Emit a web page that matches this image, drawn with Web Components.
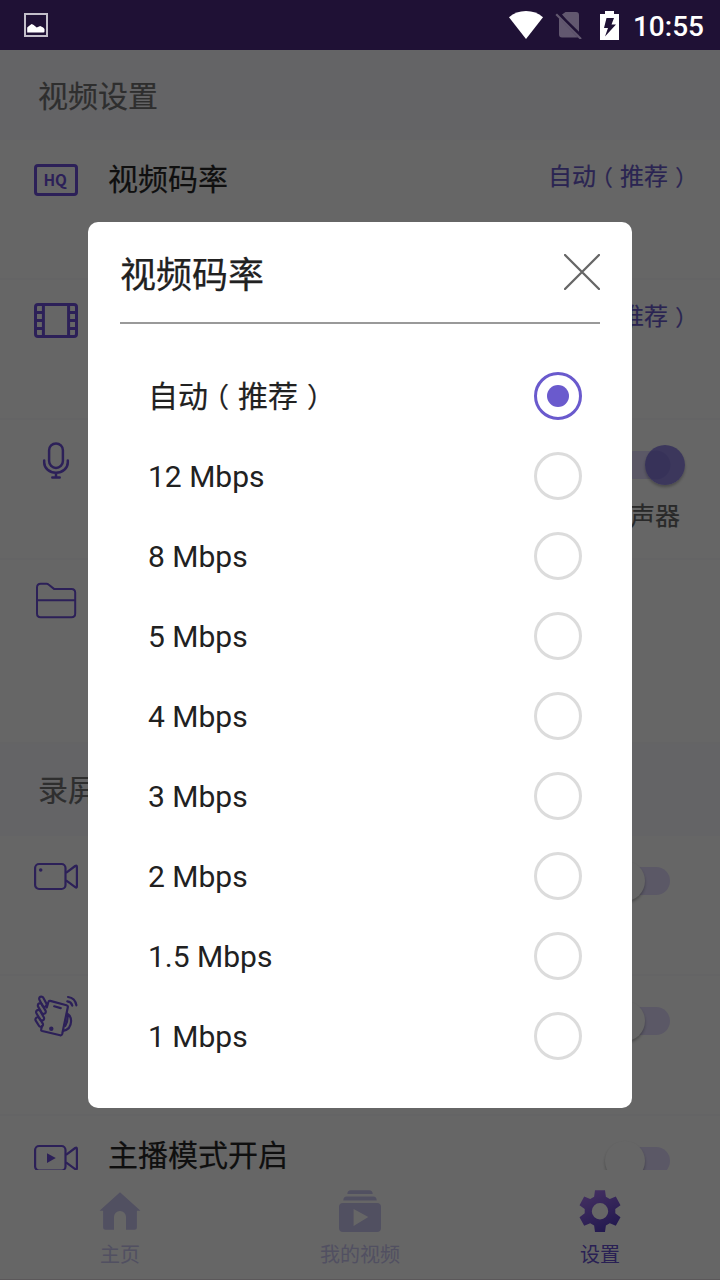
<!DOCTYPE html>
<html lang="zh-CN">
<head>
<meta charset="utf-8">
<title>视频设置</title>
<style>
  html, body {
    margin: 0;
    height: 100%;
    overflow: hidden;
  }
  body {
    font-family: Roboto, "Noto Sans CJK SC", sans-serif;
    --accent: #6a5acd;
    --icon: #6e50dc;
  }
</style>
</head>
<body>
<screen-recorder></screen-recorder>

<script>
const ICONS = {
  hq: `<rect x="1.5" y="7.5" width="41" height="29" rx="2.5" stroke-width="3"/>
    <text x="9.4" y="27.9" font-family="Noto Sans CJK SC, sans-serif" font-weight="700" font-size="16" textLength="23.5" lengthAdjust="spacingAndGlyphs" fill="currentColor" stroke="none">HQ</text>`,
  film: `<g stroke-width="3"><rect x="1.5" y="6.5" width="41" height="32" rx="2.5"/>
    <path d="M9.4 6.5v32M34.6 6.5v32M1.5 14.4h8M1.5 22.4h8M1.5 30.4h8M34.6 14.4h8M34.6 22.4h8M34.6 30.4h8"/></g>`,
  mic: `<g stroke-width="2.5" stroke-linecap="round"><rect x="15.1" y="5.4" width="13.8" height="24.6" rx="6.9"/>
    <path d="M10.2 22.600v2a11.800 10.200 0 0 0 23.600 0v-2M22 35v4.400M18.300 39.600h7.400"/></g>`,
  folder: `<path stroke-width="2" stroke-linejoin="round" d="M3 35V9.500q0-3.700 3.700-3.700h6q1 0 1.800.7L20 10.900h17.500q3.700 0 3.700 3.700V35.500q0 3.700-3.700 3.700h-31Q3 39.200 3 35.500zM3 22.300h38"/>`,
  camera: `<g stroke-width="2.200"><rect x="1.100" y="10" width="30.400" height="25" rx="4"/>
    <path stroke-linejoin="round" d="M32 18.800 41.200 12q1.700-1 1.700.8v19.500q0 2-1.700.8L32 26.400"/></g>
    <circle cx="6.700" cy="16" r="1.800" fill="currentColor" stroke="none"/>`,
  shake: `<g stroke-width="2.200" stroke-linecap="round" stroke-linejoin="round">
    <path d="M12.800 13.500 14.400 8q.4-1.500 1.900-1.100l16.200 4.300q1.700.5 1.300 2.100L28.200 40q-.5 1.600-2 1.300L8.200 37q-1.400-.4-1-1.800l.7-3"/>
    <path d="M33 19.500q4.200 2.400 4.100 7.500-.3 8.700-8 9.800M33.300 19.500q1.200 6.500-2 12.300M20.200 12.300l6.500 1.800"/>
    <rect x="-5.500" y="-2.200" width="11" height="4.400" rx="2.200" transform="translate(8.900 7.700) rotate(62)"/>
    <rect x="-5.800" y="-2.200" width="11.600" height="4.400" rx="2.200" transform="translate(7.800 14.600) rotate(60)"/>
    <rect x="-5.800" y="-2.200" width="11.600" height="4.400" rx="2.200" transform="translate(6.100 21.200) rotate(60)"/>
    <rect x="-5.200" y="-2.200" width="10.400" height="4.400" rx="2.200" transform="translate(5.200 28) rotate(58)"/>
    <path d="M33.300 7.400q4 .6 5 4.200M34 3q7.200 1 8.400 8.300"/></g>
    <circle cx="17.300" cy="34.700" r="2.200" fill="currentColor" stroke="none"/>`,
  live: `<g stroke-width="2.200"><rect x="1.100" y="12" width="30.400" height="24.500" rx="4"/>
    <path stroke-linejoin="round" d="M32 20.800 41.200 14q1.700-1 1.700.8v19.500q0 2-1.700.8L32 28.400"/></g>
    <path d="M13 19.300l8.800 4.700-8.800 4.900z" fill="currentColor" stroke="none"/>`,
  home: `<path fill="currentColor" stroke="none" d="M22 4.300 42.500 22.800h-3.600V39.300q0 2.500-2.500 2.500H28V29a6 6 0 0 0-12 0v12.800H7.600q-2.500 0-2.500-2.500V22.800H1.500z"/>`,
  videos: `<g fill="currentColor" stroke="none"><path d="M9.300 6q0-3.800 3.500-3.800h18.400q3.500 0 3.500 3.800zM5.300 12.500q0-4 3.500-4h26.400q3.500 0 3.500 4z"/>
    <path fill-rule="evenodd" d="M5 15h34q4 0 4 4v21q0 4-4 4H5q-4 0-4-4V19q0-4 4-4zM15.600 21v17L30.300 29z"/></g>`,
  gear: `<defs><linearGradient id="g" x1="0.200" y1="0" x2="0.700" y2="1"><stop offset="0" stop-color="#ad79f5"/><stop offset="1" stop-color="#543dc4"/></linearGradient></defs>
    <path fill="url(#g)" fill-rule="evenodd" stroke="none" d="M17 2.300h10l.9 6.500 3.900 2.200 6-2.500 4.700 8.700-5.200 3.900v4.200l5.200 4-4.700 8.500-6-2.500-3.900 2.200-.9 6.500H17l-.9-6.500-3.900-2.200-6 2.500-4.700-8.500 5.200-4v-4.200l-5.200-3.900 4.700-8.700 6 2.500L16.100 8.800zM22 15a8.200 8.200 0 1 0 0 16.400A8.200 8.200 0 0 0 22 15z"/>`
};

class AppIcon extends HTMLElement {
  constructor() {
    super();
    this.attachShadow({mode: "open"});
    this.shadowRoot.innerHTML = `
      <style>
        :host { display: block; width: 44px; height: 44px; flex: none; }
        svg { display: block; overflow: visible; }
      </style>
      <svg width="44" height="44" viewBox="0 0 44 44" fill="none" stroke="currentColor">${ICONS[this.getAttribute("name")]}</svg>
    `;
  }
}

// 自动（推荐）
class AutoLabel extends HTMLElement {
  constructor() {
    super();
    this.attachShadow({mode: "open"});
    this.shadowRoot.innerHTML = `
      <style>
        :host {
          display: inline-block;
          white-space: nowrap;
          font-family: "Noto Sans CJK SC", sans-serif;
          text-spacing-trim: space-all;
          -webkit-text-stroke: .2px currentColor;
        }
        span { font-size: .92em; line-height: 1; }
        .open { margin: 0 .32em 0 -.233em; }
        .close { margin: 0 -.238em 0 .325em; }
      </style>自动<span class="open">（</span>推荐<span class="close">）</span>`;
  }
}

class StatusBar extends HTMLElement {
  constructor() {
    super();
    this.attachShadow({mode: "open"});
    this.shadowRoot.innerHTML = `
      <style>
        :host {
          display: flex;
          align-items: center;
          height: 50px;
          box-sizing: border-box;
          padding: 0 16px 0 24px;
          background: #1f1135;
          color: #fff;
        }
        svg { display: block; flex: none; }
        .space { flex: 1; }
        .sim { margin-left: 12px; }
        .battery { margin-left: 17px; }
        .time { margin-left: 14px; font-size: 28px; line-height: 46px; font-weight: 500; padding-top: 4px; }
      </style>
      <svg width="24" height="24" viewBox="0 0 24 24">
        <rect x="1" y="1" width="22" height="22" fill="none" stroke="#c3bfca" stroke-width="2"/>
        <path fill="#fff" d="M3.200 19.500V14.500l3-2.500 1.500-1 2 1 3 2.500 3.500-1.500 3 1.500 1.300 1.500V18.500q0 1-1 1z"/>
      </svg>
      <div class="space"></div>
      <svg width="34" height="28" viewBox="0 0 34 28"><path fill="#fff" d="M0 6.300Q7 0 17 0t17 6.300L17 28z"/></svg>
      <svg class="sim" width="28" height="28" viewBox="0 0 28 28">
        <path fill="#62586f" d="M7 3.500 10.500 1H21q3 0 3 3v20.500zM4 7l19 19.500H7q-3 0-3-3z"/>
        <path d="M2.200 1.200 27 25.500" stroke="#1f1135" stroke-width="2.500"/>
        <path d="M1.200 3.200 26 28" stroke="#62586f" stroke-width="2.200"/>
      </svg>
      <svg class="battery" width="19" height="29" viewBox="0 0 19 29">
        <path fill="#fff" d="M0 3h5V0h9v3h5v26H0z"/>
        <path fill="#1f1135" d="M6.500 7h7.500l-2.500 6.500h4.500L5 25.500l3-8.500H4z"/>
      </svg>
      <div class="time">10:55</div>
    `;
  }
}

class SectionTitle extends HTMLElement {
  constructor() {
    super();
    this.attachShadow({mode: "open"});
    this.shadowRoot.innerHTML = `
      <style>
        :host {
          display: flex;
          align-items: center;
          height: 92px;
          box-sizing: border-box;
          padding: 0 0 5px 38px;
          background: #fafaff;
          color: #737373;
          font-size: 30px;
          -webkit-text-stroke: .2px currentColor;
        }
      </style>
      <slot></slot>
    `;
  }
}

class SettingRow extends HTMLElement {
  constructor() {
    super();
    this.attachShadow({mode: "open"});
    this.shadowRoot.innerHTML = `
      <style>
        :host {
          display: flex;
          align-items: flex-start;
          height: 140px;
          box-sizing: border-box;
          padding: 0 28px 0 34px;
          border-bottom: 2px solid #fafafc;
        }
        app-icon { margin-top: 18px; color: var(--icon); }
        .title {
          margin: 26px 0 0 30px;
          flex: 1;
          font-size: 30px;
          line-height: 28px;
          color: #262626;
          -webkit-text-stroke: .2px currentColor;
        }
      </style>
      <app-icon name="${this.getAttribute("icon")}"></app-icon>
      <div class="title"><slot></slot></div>
      <slot name="value"></slot>
    `;
  }
}

class ToggleSwitch extends HTMLElement {
  constructor() {
    super();
    this.attachShadow({mode: "open"});
    this.shadowRoot.innerHTML = `
      <style>
        :host {
          display: flex;
          align-items: center;
          width: 50px;
          height: 28px;
          border-radius: 14px;
          background: #e3dcff;
        }
        i {
          flex: none;
          width: 40px;
          height: 40px;
          margin-left: -15px;
          border-radius: 50%;
          background: #fefefe;
          box-shadow: 0 2px 3px rgba(0, 0, 0, .28);
        }
        :host([on]) i {
          margin-left: 25px;
          background: radial-gradient(circle at 11px 20px, #8b7edf 14px, #968be6 15px);
        }
      </style>
      <i></i>
    `;
  }
}

class BottomNav extends HTMLElement {
  constructor() {
    super();
    this.attachShadow({mode: "open"});
    this.shadowRoot.innerHTML = `
      <style>
        :host {
          display: grid;
          grid-template-columns: repeat(3, 1fr);
          position: relative;
          height: 110px;
          flex: none;
          box-sizing: border-box;
          background: #fff;
          border-bottom: 1px solid #e4dce2;
          font-size: 20px;
          color: #cbc7f3;
        }
        div {
          display: flex;
          flex-direction: column;
          align-items: center;
          padding-top: 18px;
        }
        span { line-height: 30px; margin-top: 8px; }
        .on { color: #6750d2; }
      </style>
      <div><app-icon name="home"></app-icon><span>主页</span></div>
      <div><app-icon name="videos"></app-icon><span>我的视频</span></div>
      <div class="on"><app-icon name="gear"></app-icon><span>设置</span></div>
    `;
  }
}

class RadioOption extends HTMLElement {
  constructor() {
    super();
    this.attachShadow({mode: "open"});
    this.shadowRoot.innerHTML = `
      <style>
        :host {
          display: flex;
          align-items: center;
          justify-content: space-between;
          height: 80px;
          padding: 0 18px 0 28px;
          font-size: 30px;
          line-height: 80px;
        }
        .label { padding-top: 2px; }
        :host([checked]) .label { padding: 0 0 1px; }
        i {
          display: grid;
          place-items: center;
          width: 48px;
          height: 48px;
          box-sizing: border-box;
          border: 3px solid #dcdcdc;
          border-radius: 50%;
        }
        :host([checked]) i { border-color: var(--accent); }
        :host([checked]) i::after {
          content: "";
          width: 22.500px;
          height: 22.500px;
          border-radius: 50%;
          background: var(--accent);
        }
      </style>
      <div class="label"><slot></slot></div>
      <i></i>
    `;
  }
}

class BitrateDialog extends HTMLElement {
  constructor() {
    super();
    this.attachShadow({mode: "open"});
    this.shadowRoot.innerHTML = `
      <style>
        :host {
          display: block;
          width: 544px;
          height: 886px;
          box-sizing: border-box;
          padding: 0 32px 32px;
          border-radius: 10px;
          background: #fff;
          color: #212121;
        }
        header {
          display: flex;
          align-items: center;
          justify-content: space-between;
          height: 100px;
          border-bottom: 2px solid #999;
          margin-bottom: 32px;
          font-size: 36px;
        }
        header span { padding-bottom: 1px; -webkit-text-stroke: .25px currentColor; }
      </style>
      <header>
        <span>视频码率</span>
        <svg width="36" height="36" viewBox="0 0 36 36"><path d="M1 1l34 34M35 1 1 35" stroke="#666" stroke-width="2.300" stroke-linecap="round"/></svg>
      </header>
      <slot></slot>
    `;
  }
}

class ScreenRecorder extends HTMLElement {
  constructor() {
    super();
    this.attachShadow({mode: "open"});
    this.shadowRoot.innerHTML = `
      <style>
        :host {
          display: flex;
          flex-direction: column;
          width: 720px;
          height: 1280px;
          overflow: hidden;
        }
        .page {
          position: relative;
          flex: 1;
          min-height: 0;
          display: flex;
          flex-direction: column;
          background: #fff;
        }
        /* the last row runs on under the nav */
        .list { flex: 1; min-height: 0; }
        .first { height: 90px; padding-bottom: 3px; }
        .tall { height: 184px; }
        .value { font-size: 24px; line-height: 69px; color: var(--accent); }
        toggle-switch { margin: 31px 22px 0 0; }
        .audio {
          display: flex;
          flex-direction: column;
          align-items: flex-end;
          font-size: 25px;
          color: #666;
          -webkit-text-stroke: .2px currentColor;
        }
        .audio span { line-height: 36px; margin: 20px 12px 0 0; }
        .scrim {
          position: absolute;
          inset: 0;
          display: flex;
          justify-content: center;
          align-items: center;
          background: rgba(0, 0, 0, .6);
        }
      </style>
      <status-bar></status-bar>
      <div class="page">
        <div class="list">
          <section-title class="first">视频设置</section-title>
          <setting-row icon="hq">视频码率<auto-label slot="value" class="value"></auto-label></setting-row>
          <setting-row icon="film"><auto-label slot="value" class="value"></auto-label></setting-row>
          <setting-row icon="mic">
            <div slot="value" class="audio"><toggle-switch on></toggle-switch><span>扬声器</span></div>
          </setting-row>
          <setting-row icon="folder" class="tall"></setting-row>
          <section-title>录屏设置</section-title>
          <setting-row icon="camera"><toggle-switch slot="value"></toggle-switch></setting-row>
          <setting-row icon="shake"><toggle-switch slot="value"></toggle-switch></setting-row>
          <setting-row icon="live">主播模式开启<toggle-switch slot="value"></toggle-switch></setting-row>
        </div>
        <bottom-nav></bottom-nav>
        <div class="scrim">
          <bitrate-dialog>
            <radio-option checked><auto-label></auto-label></radio-option>
            <radio-option>12 Mbps</radio-option>
            <radio-option>8 Mbps</radio-option>
            <radio-option>5 Mbps</radio-option>
            <radio-option>4 Mbps</radio-option>
            <radio-option>3 Mbps</radio-option>
            <radio-option>2 Mbps</radio-option>
            <radio-option>1.5 Mbps</radio-option>
            <radio-option>1 Mbps</radio-option>
          </bitrate-dialog>
        </div>
      </div>
    `;
  }
}

customElements.define("app-icon", AppIcon);
customElements.define("auto-label", AutoLabel);
customElements.define("status-bar", StatusBar);
customElements.define("section-title", SectionTitle);
customElements.define("toggle-switch", ToggleSwitch);
customElements.define("setting-row", SettingRow);
customElements.define("bottom-nav", BottomNav);
customElements.define("radio-option", RadioOption);
customElements.define("bitrate-dialog", BitrateDialog);
customElements.define("screen-recorder", ScreenRecorder);
</script>
</body>
</html>
